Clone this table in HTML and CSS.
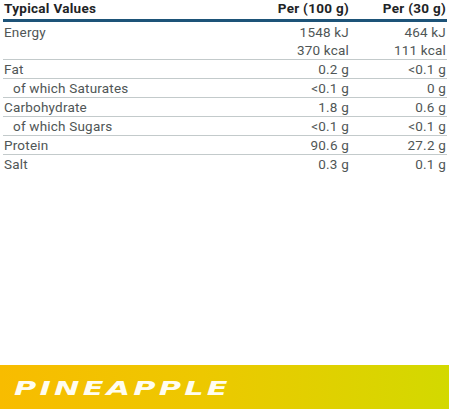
FILE: index.html
```html
<!DOCTYPE html>
<html lang="en">
<head>
  <meta charset="UTF-8">
  <meta name="viewport" content="width=device-width, initial-scale=1.0">
  <title>Nutrition Facts - Pineapple</title>
  <link rel="stylesheet" href="styles.css">
</head>
<body>
  <div class="page">
    <table class="nutrition">
      <thead>
        <tr>
          <th class="label">Typical Values</th>
          <th class="num">Per (100 g)</th>
          <th class="num">Per (30 g)</th>
        </tr>
      </thead>
      <tbody>
        <tr class="no-line">
          <td>Energy</td>
          <td class="num">1548 kJ</td>
          <td class="num">464 kJ</td>
        </tr>
        <tr>
          <td></td>
          <td class="num">370 kcal</td>
          <td class="num">111 kcal</td>
        </tr>
        <tr>
          <td>Fat</td>
          <td class="num">0.2 g</td>
          <td class="num">&lt;0.1 g</td>
        </tr>
        <tr>
          <td class="sub">of which Saturates</td>
          <td class="num">&lt;0.1 g</td>
          <td class="num">0 g</td>
        </tr>
        <tr>
          <td>Carbohydrate</td>
          <td class="num">1.8 g</td>
          <td class="num">0.6 g</td>
        </tr>
        <tr>
          <td class="sub">of which Sugars</td>
          <td class="num">&lt;0.1 g</td>
          <td class="num">&lt;0.1 g</td>
        </tr>
        <tr>
          <td>Protein</td>
          <td class="num">90.6 g</td>
          <td class="num">27.2 g</td>
        </tr>
        <tr class="no-line">
          <td>Salt</td>
          <td class="num">0.3 g</td>
          <td class="num">0.1 g</td>
        </tr>
      </tbody>
    </table>

    <div class="flavour">
      <span class="flavour-name">PINEAPPLE</span>
    </div>
  </div>
</body>
</html>
```

FILE: styles.css
```css
body {
  margin: 0;
  font-family: Roboto, "Liberation Sans", sans-serif;
  background: #ffffff;
}

.page {
  width: 450px;
  height: 412px;
  display: flex;
  flex-direction: column;
}

.nutrition {
  width: 444px;
  margin: 0 3px;
  border-collapse: collapse;
  font-size: 13.5px;
  letter-spacing: 0.2px;
  color: #505656;
}

.nutrition th {
  font-weight: bold;
  color: #1e2426;
  height: 17px;
  padding: 0 1px 2px;
  line-height: 17px;
  border-bottom: 3px solid #1d5378;
  vertical-align: bottom;
  letter-spacing: 0.3px;
}

.nutrition td {
  height: 18px;
  padding: 0 1px;
  line-height: 18px;
  border-bottom: 1px solid #c3cacb;
}

.nutrition tr.no-line td {
  border-bottom: none;
}

.nutrition tbody tr:first-child td {
  height: 19px;
}

.label {
  text-align: left;
}

.num {
  text-align: right;
}

.nutrition th:nth-child(2),
.nutrition td:nth-child(2) {
  width: 150px;
}

.nutrition th:nth-child(3),
.nutrition td:nth-child(3) {
  width: 95px;
}

.sub {
  padding-left: 10px !important;
}

.flavour {
  margin-top: auto;
  margin-bottom: 3px;
  height: 44px;
  width: 449px;
  display: flex;
  align-items: center;
  background: linear-gradient(90deg, #f8bc00 0%, #edc800 45%, #d3d900 100%);
}

.flavour-name {
  margin-left: 14px;
  padding-top: 2px;
  font-family: "DejaVu Sans", sans-serif;
  font-weight: bold;
  font-style: italic;
  font-size: 19px;
  letter-spacing: 2px;
  color: #fffdf0;
  transform: scaleX(1.6);
  transform-origin: left center;
}
```
